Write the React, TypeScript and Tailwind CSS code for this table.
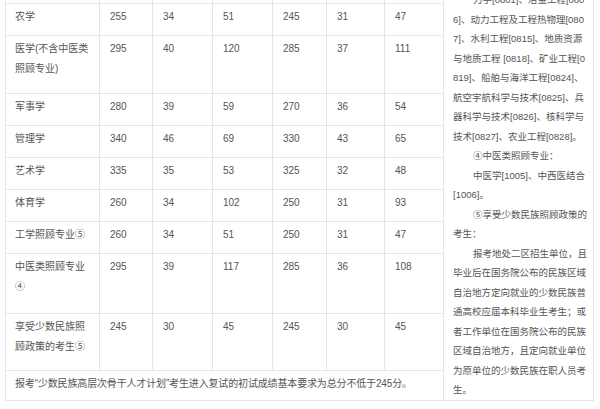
const rows: { label: string[]; nums: string[]; h: string }[] = [
  { label: ['农学'], nums: ['255', '34', '51', '245', '31', '47'], h: 'h-[32px]' },
  { label: ['医学(不含中医类', '照顾专业)'], nums: ['295', '40', '120', '285', '37', '111'], h: 'h-[58px]' },
  { label: ['军事学'], nums: ['280', '39', '59', '270', '36', '54'], h: 'h-[32px]' },
  { label: ['管理学'], nums: ['340', '46', '69', '330', '43', '65'], h: 'h-[32px]' },
  { label: ['艺术学'], nums: ['335', '35', '53', '325', '32', '48'], h: 'h-[32px]' },
  { label: ['体育学'], nums: ['260', '34', '102', '250', '31', '93'], h: 'h-[32px]' },
  { label: ['工学照顾专业⑤'], nums: ['260', '34', '51', '250', '31', '47'], h: 'h-[32px]' },
  { label: ['中医类照顾专业', '④'], nums: ['295', '39', '117', '285', '36', '108'], h: 'h-[60px]' },
  { label: ['享受少数民族照', '顾政策的考生⑤'], nums: ['245', '30', '45', '245', '30', '45'], h: 'h-[57px]' },
];

const numWidths = ['w-[53px]', 'w-[60px]', 'w-[60px]', 'w-[54px]', 'w-[58px]', 'w-[58px]'];

// right column, one entry per rendered line; true = indented paragraph start
const notes: [string, boolean][] = [
  ['力学[0801]、冶金工程[080', true],
  ['6]、动力工程及工程热物理[080', false],
  ['7]、水利工程[0815]、地质资源', false],
  ['与地质工程 [0818]、矿业工程[0', false],
  ['819]、船舶与海洋工程[0824]、', false],
  ['航空宇航科学与技术[0825]、兵', false],
  ['器科学与技术[0826]、核科学与', false],
  ['技术[0827]、农业工程[0828]。', false],
  ['④中医类照顾专业：', true],
  ['中医学[1005]、中西医结合', true],
  ['[1006]。', false],
  ['⑤享受少数民族照顾政策的', true],
  ['考生：', false],
  ['报考地处二区招生单位，且', true],
  ['毕业后在国务院公布的民族区域', false],
  ['自治地方定向就业的少数民族普', false],
  ['通高校应届本科毕业生考生；或', false],
  ['者工作单位在国务院公布的民族', false],
  ['区域自治地方，且定向就业单位', false],
  ['为原单位的少数民族在职人员考', false],
  ['生。', false],
];

function Cells({ label, nums }: { label: string[]; nums: string[] }) {
  return (
    <>
      <div className="w-[94px] shrink-0 border-r border-[#e6e6e6] pl-[9px] pt-[3px]">
        {label.map((l) => (
          <div key={l} className="whitespace-nowrap">{l}</div>
        ))}
      </div>
      {nums.map((n, i) => (
        <div key={i} className={`${numWidths[i]} shrink-0 border-r border-[#e6e6e6] pl-[10px] pt-[3px] last:border-r-0`}>
          {n}
        </div>
      ))}
    </>
  );
}

export default function App() {
  return (
    <div
      className="w-[600px] h-[409px] bg-white overflow-hidden text-[10px] leading-[19.5px] text-[#555]"
      style={{ fontFamily: '"Liberation Sans", "Noto Sans CJK SC", sans-serif' }}
    >
      <div className="ml-[5px] flex w-[589px] border-l border-r border-b border-[#e6e6e6]">
        <div className="w-[438px] shrink-0 flex flex-col border-r border-[#e6e6e6]">
          <div className="h-[3px] flex">
            <div className="w-[94px] shrink-0 border-r border-[#e6e6e6]" />
            {numWidths.map((w, i) => (
              <div key={i} className={`${w} shrink-0 border-r border-[#e6e6e6] last:border-r-0`} />
            ))}
          </div>
          {rows.map((r) => (
            <div key={r.label.join('')} className={`${r.h} flex border-t border-[#e6e6e6]`}>
              <Cells label={r.label} nums={r.nums} />
            </div>
          ))}
          <div className="h-[30px] border-t border-[#e6e6e6] pl-[9px] pt-[3px] whitespace-nowrap tracking-[-0.15px]">
            报考“少数民族高层次骨干人才计划”考生进入复试的初试成绩基本要求为总分不低于245分。
          </div>
        </div>
        <div className="flex-1 overflow-hidden text-[9.5px]">
          <div className="-mt-[10px] pl-[9px]">
            {notes.map(([t, indent], i) => (
              <div key={i} className={`whitespace-nowrap ${indent ? 'pl-[20px]' : ''}`}>
                {t}
              </div>
            ))}
          </div>
        </div>
      </div>
    </div>
  );
}
